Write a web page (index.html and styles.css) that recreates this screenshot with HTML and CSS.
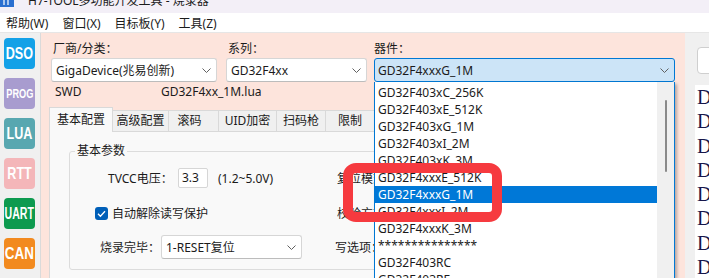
FILE: index.html
```html
<!DOCTYPE html>
<html>
<head>
    <meta charset="utf-8">
    <title>H7-TOOL 烧录器</title>
    <link rel="stylesheet" href="styles.css">
</head>
<body>
<div class="titlebar">
    <svg class="app-icon" width="14" height="14" viewBox="0 0 14 14">
        <rect width="14" height="14" fill="#2a6fd0"/>
        <path d="M4 2 V12 M8 2 V12" stroke="#fff" stroke-width="1.2"/>
    </svg>
    <span class="title">H7-TOOL多功能开发工具 - 烧录器</span>
</div>
<div class="menubar">
    <span>帮助(W)</span>
    <span>窗口(X)</span>
    <span>目标板(Y)</span>
    <span>工具(Z)</span>
</div>

<div class="main">
    <nav class="sidebar">
        <div class="mod dso"><span>DSO</span></div>
        <div class="mod prog"><span>PROG</span></div>
        <div class="mod lua"><span>LUA</span></div>
        <div class="mod rtt"><span>RTT</span></div>
        <div class="mod uart"><span>UART</span></div>
        <div class="mod can"><span>CAN</span></div>
    </nav>

    <section class="panel">
        <div class="pick-row">
            <div class="field f-vendor">
                <label>厂商/分类：</label>
                <div class="combo">
                    <span>GigaDevice(兆易创新)</span>
                    <svg class="chev" width="9" height="5" viewBox="0 0 9 5"><path d="M0.5 0.5 L4.5 4.5 L8.5 0.5" fill="none" stroke="#606060"/></svg>
                </div>
            </div>
            <div class="field f-series">
                <label>系列：</label>
                <div class="combo">
                    <span>GD32F4xx</span>
                    <svg class="chev" width="9" height="5" viewBox="0 0 9 5"><path d="M0.5 0.5 L4.5 4.5 L8.5 0.5" fill="none" stroke="#606060"/></svg>
                </div>
            </div>
            <div class="field f-device">
                <label>器件：</label>
                <div class="combo open">
                    <span>GD32F4xxxG_1M</span>
                    <svg class="chev" width="9" height="5" viewBox="0 0 9 5"><path d="M0.5 0.5 L4.5 4.5 L8.5 0.5" fill="none" stroke="#606060"/></svg>
                    <div class="droplist">
                        <ul>
                            <li>GD32F403xC_256K</li>
                            <li>GD32F403xE_512K</li>
                            <li>GD32F403xG_1M</li>
                            <li>GD32F403xI_2M</li>
                            <li>GD32F403xK_3M</li>
                            <li>GD32F4xxxE_512K</li>
                            <li class="sel">GD32F4xxxG_1M</li>
                            <li>GD32F4xxxI_2M</li>
                            <li>GD32F4xxxK_3M</li>
                            <li>***************</li>
                            <li>GD32F403RC</li>
                            <li>GD32F403RE</li>
                        </ul>
                        <div class="vscroll"><div class="thumb"></div></div>
                    </div>
                </div>
            </div>
        </div>

        <div class="info-row">
            <span class="iface">SWD</span>
            <span>GD32F4xx_1M.lua</span>
        </div>

        <div class="tabs">
            <div class="tab active">基本配置</div>
            <div class="tab">高级配置</div>
            <div class="tab">滚码</div>
            <div class="tab">UID加密</div>
            <div class="tab">扫码枪</div>
            <div class="tab">限制</div>
        </div>
        <div class="tab-body">
            <fieldset class="group">
                <legend>基本参数</legend>
                <div class="row row1">
                    <div class="left">
                        <span class="lbl-tvcc">TVCC电压：</span>
                        <div class="num">3.3</div>
                        <span class="hint">(1.2~5.0V)</span>
                    </div>
                    <span class="rlabel">复位模式：</span>
                </div>
                <div class="row row2">
                    <div class="left">
                        <svg class="check" width="13" height="13" viewBox="0 0 13 13">
                            <rect width="13" height="13" rx="3" fill="#005fb8"/>
                            <path d="M3 6.8 L5.4 9.2 L10 4.2" fill="none" stroke="#fff" stroke-width="1.3"/>
                        </svg>
                        <span>自动解除读写保护</span>
                    </div>
                    <span class="rlabel">校验方式：</span>
                </div>
                <div class="row row3">
                    <div class="left">
                        <span class="lbl-done">烧录完毕：</span>
                        <div class="combo small">
                            <span>1-RESET复位</span>
                            <svg class="chev" width="9" height="5" viewBox="0 0 9 5"><path d="M0.5 0.5 L4.5 4.5 L8.5 0.5" fill="none" stroke="#606060"/></svg>
                        </div>
                    </div>
                    <span class="rlabel shift">写选项：</span>
                </div>
            </fieldset>
        </div>
    </section>

    <aside class="aside">
        <div class="btn"></div>
        <div class="log">
            <div>D</div>
            <div>D</div>
            <div>D</div>
            <div>D</div>
            <div>D</div>
            <div>D</div>
            <div>D</div>
            <div>D</div>
        </div>
    </aside>
</div>

<div class="mark"></div>
</body>
</html>
```

FILE: styles.css
```css
body {
    margin: 0;
    width: 709px;
    height: 278px;
    overflow: hidden;
    position: relative;
    font-family: "Noto Sans", "Noto Sans CJK SC", sans-serif;
    font-size: 12px;
    color: #1b1b1b;
    background-color: #f0f0f0;
}

/* window chrome */
.titlebar {
    height: 13px;
    background-color: #f3eff7;
    display: flex;
    align-items: flex-end;
    overflow: hidden;
}
.app-icon {
    align-self: flex-start;
    margin-top: -7px;
    flex-shrink: 0;
}
.title {
    line-height: 24px;
    margin-left: 14px;
    white-space: nowrap;
}
.menubar {
    height: 19px;
    background-color: #fff;
    border-bottom: 1px solid #e6e6e6;
    display: flex;
    align-items: center;
    padding-left: 6px;
    gap: 14px;
}

.main {
    display: flex;
    height: 245px;
}

/* module buttons */
.sidebar {
    width: 41px;
    flex-shrink: 0;
    border-right: 1px solid #dadada;
    display: flex;
    flex-direction: column;
    padding: 5px 0 0 4px;
    box-sizing: border-box;
    gap: 9px;
}
.mod {
    width: 31px;
    height: 31px;
    border-radius: 4px;
    color: #fff;
    font-family: "Liberation Sans", Arial, sans-serif;
    font-weight: bold;
    font-size: 17px;
    display: flex;
    align-items: center;
    justify-content: center;
    overflow: hidden;
}
.mod span {
    display: inline-block;
    transform: scaleX(0.74);
    white-space: nowrap;
}
.dso { background-color: #13a1e7; }
.prog { background-color: #a89ccf; font-size: 13.5px; }
.prog span { transform: scaleX(0.68); }
.lua { background-color: #58a7b0; }
.rtt { background-color: #f4b6b9; }
.uart { background-color: #0d9a4f; font-size: 16px; }
.uart span { transform: scaleX(0.66); }
.can { background-color: #f28a1f; }
.can span { transform: scaleX(0.79); }

/* main panel */
.panel {
    width: 644px;
    flex-shrink: 0;
    background-color: #fde4dc;
    padding: 8px 0 0 8px;
    box-sizing: border-box;
}
.pick-row {
    display: flex;
    margin-left: 2px;
}
.field label {
    display: block;
    line-height: 16px;
    padding-left: 2px;
}
.f-vendor { width: 166px; margin-right: 9px; }
.f-series { width: 141px; margin-right: 7px; }
.f-device { width: 301px; }
.f-device label { padding-left: 0; }

.combo {
    height: 24px;
    box-sizing: border-box;
    margin-top: 1px;
    border: 1px solid #d6d6d6;
    border-bottom-color: #bcbcbc;
    border-radius: 3px;
    background-color: #fff;
    display: flex;
    align-items: center;
    justify-content: space-between;
    padding: 0 5px 0 4px;
    position: relative;
    white-space: nowrap;
}
.combo.open {
    background-color: #cce4f7;
    border-color: #0078d4;
    padding-left: 3px;
}
.combo.small {
    width: 141px;
    margin-top: 0;
}

/* open dropdown of the device box */
.droplist {
    position: absolute;
    top: calc(100% + 1px);
    left: -1px;
    right: -1px;
    height: 196px;
    overflow: hidden;
    background-color: #fff;
    border: 1px solid #0078d4;
    border-top: none;
    border-bottom: none;
    box-shadow: 2px 2px 3px rgba(0, 0, 0, 0.28);
    display: flex;
    z-index: 5;
    color: #1b1b1b;
}
.droplist ul {
    list-style: none;
    margin: 0;
    padding: 2px 0 0 0;
    flex: 1;
}
.droplist li {
    height: 17px;
    line-height: 17px;
    padding-left: 3px;
}
.droplist li.sel {
    background-color: #0078d7;
    color: #fff;
}
.vscroll {
    width: 17px;
    background-color: #f0f0f0;
}
.thumb {
    width: 2px;
    height: 72px;
    margin: 18px 0 0 8px;
    background-color: #8a8a8a;
    border-radius: 1px;
}

.info-row {
    margin-top: 2px;
    line-height: 16px;
    padding-left: 6px;
    display: flex;
}
.iface {
    width: 106px;
}

/* tabs */
.tabs {
    margin-top: 7px;
    height: 24px;
    display: flex;
    align-items: flex-end;
}
.tab {
    height: 21px;
    line-height: 20px;
    box-sizing: border-box;
    background-color: #f0f0f0;
    border: 1px solid #d9d9d9;
    border-bottom: none;
    text-align: center;
    margin-left: -1px;
    white-space: nowrap;
}
.tab:nth-child(1) { width: 64px; margin-left: 0; }
.tab:nth-child(2) { width: 57px; }
.tab:nth-child(3) { width: 51px; padding-right: 8px; }
.tab:nth-child(4) { width: 59px; }
.tab:nth-child(5) { width: 50px; }
.tab:nth-child(6) { width: 50px; }
.tab.active {
    height: 25px;
    line-height: 23px;
    margin-bottom: -1px;
    background-color: #f9f9f9;
    position: relative;
    z-index: 1;
}
.tab-body {
    border: 1px solid #d9d9d9;
    border-bottom: none;
    background-color: #f9f9f9;
    margin-right: 15px;
    height: 146px;
    padding-left: 19px;
    overflow: hidden;
}

.group {
    margin: 11px 0 0 0;
    width: 560px;
    border: 1px solid #dcdcdc;
    border-radius: 3px;
    padding: 9px 0 10px 0;
}
.group legend {
    line-height: 16px;
    padding: 0 2px;
    margin-left: 5px;
}
.row {
    display: flex;
    align-items: center;
}
.row .left {
    width: 267px;
    flex-shrink: 0;
    display: flex;
    align-items: center;
    box-sizing: border-box;
    white-space: nowrap;
}
.row1 { height: 20px; }
.row1 .left { padding-left: 38px; }
.lbl-tvcc { width: 70px; }
.num {
    width: 30px;
    height: 20px;
    box-sizing: border-box;
    border: 1px solid #d6d6d6;
    border-radius: 2px;
    background-color: #fff;
    line-height: 18px;
    padding-left: 3px;
}
.hint { margin-left: 10px; }

.row2 { height: 20px; margin-top: 15px; }
.row2 .left { padding-left: 25px; }
.check { margin-right: 4px; }

.row3 { height: 24px; margin-top: 12px; }
.row3 .left { padding-left: 30px; }
.lbl-done { width: 61px; }

/* labels of the right column end under the open list */
.rlabel {
    white-space: nowrap;
    width: 37px;
    overflow: hidden;
}
.rlabel.shift {
    margin-left: -2px;
    width: 39px;
}

/* right column */
.aside {
    flex: 1;
    padding-top: 14px;
    overflow: hidden;
}
.btn {
    margin-left: 12px;
    width: 40px;
    height: 27px;
    box-sizing: border-box;
    background-color: #fff;
    border: 1px solid #cfcfcf;
    border-radius: 4px;
}
.log {
    margin: 11px 0 0 10px;
    height: 193px;
    overflow: hidden;
    background-color: #fff;
    padding-left: 2px;
    font-family: "Liberation Serif", serif;
    font-size: 20px;
    line-height: 24.3px;
    color: #16164a;
    white-space: nowrap;
}

/* red highlight drawn over the screenshot */
.mark {
    position: absolute;
    left: 343px;
    top: 163px;
    width: 159px;
    height: 59px;
    box-sizing: border-box;
    border: 10px solid #f63a3f;
    border-radius: 13px;
    z-index: 10;
}
```
